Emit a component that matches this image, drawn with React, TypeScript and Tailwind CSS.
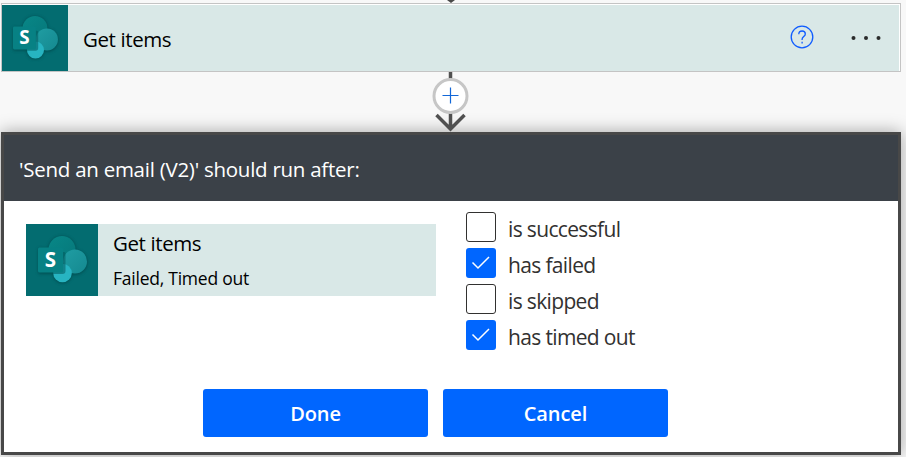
import React from "react";

function SharePointTile({ className }: { className: string }) {
  return (
    <svg className={className} viewBox="0 0 72 72" aria-label="SharePoint">
      <defs>
        <filter id="soft" x="-40%" y="-40%" width="180%" height="180%">
          <feGaussianBlur stdDeviation="1.8" />
        </filter>
        <linearGradient id="top" x1="0" y1="0" x2="1" y2="1">
          <stop offset="0" stopColor="#088787" />
          <stop offset="1" stopColor="#06777a" />
        </linearGradient>
        <linearGradient id="side" x1="0" y1="0" x2="1" y2="1">
          <stop offset="0" stopColor="#209da3" />
          <stop offset="1" stopColor="#148990" />
        </linearGradient>
      </defs>
      <rect width="72" height="72" fill="#036c70" />
      <g filter="url(#soft)" fill="#003f42" opacity="0.6">
        <circle cx="36" cy="26" r="14" />
        <circle cx="49" cy="38.5" r="12.5" />
        <circle cx="36.5" cy="49.5" r="9.8" />
        <rect x="12" y="24" width="26" height="26" rx="2" />
      </g>
      <circle cx="36" cy="25.5" r="13.5" fill="url(#top)" />
      <circle cx="49" cy="37.5" r="12" fill="url(#side)" />
      <circle cx="36.5" cy="49" r="9.3" fill="#27b4c1" />
      <path d="M27 28h11q1.500 0 1.500 1.500V47q0 3-3 3H27z" fill="#02595d" opacity="0.55" />
      <rect x="12" y="23.500" width="25" height="25" rx="1.500" fill="#078184" />
      <text
        x="24.500"
        y="43"
        textAnchor="middle"
        fill="#fff"
        className="font-['Open_Sans',sans-serif] text-[20.500px] font-bold"
      >
        S
      </text>
    </svg>
  );
}

function Check({ label, checked }: { label: string; checked: boolean }) {
  return (
    <div className="flex h-[30px] items-center gap-3">
      <span
        className={
          checked
            ? "flex size-[30px] items-center justify-center rounded-[3px] bg-[#0066ff]"
            : "size-[30px] rounded-[3px] border border-[#323130] bg-white"
        }
      >
        {checked && (
          <svg className="size-[30px]" viewBox="0 0 30 30" fill="none" stroke="#fff" strokeWidth="1.500">
            <path d="M6.500 14.500 12 20 23 9" />
          </svg>
        )}
      </span>
      <span className="pt-[4px] text-[21px] leading-[27px] tracking-[-0.650px] whitespace-nowrap text-[#323130]">
        {label}
      </span>
    </div>
  );
}

export default function App() {
  return (
    <div className="h-[457px] w-[906px] overflow-hidden bg-[#f8f8f8] font-['Open_Sans','Noto_Sans',sans-serif] text-black">
      <div className="flex h-[3px] justify-center pr-[4px]">
        <svg className="h-[3px] w-[10px]" viewBox="0 0 10 3">
          <path d="M1 0h8L5 3z" fill="#484848" />
        </svg>
      </div>
      <div className="ml-px flex h-[69px] w-[900px] items-center border border-[#c4c4c4] bg-white pt-px pr-px">
        <div className="flex h-[66px] w-full items-center bg-[#d9e8e7]">
          <SharePointTile className="size-[66px]" />
          <span className="ml-[15px] flex-1 pt-[3px] text-[20.500px] leading-[27px] tracking-[-0.400px]">Get items</span>
          <svg className="mr-[36px] mb-[2px] size-[24px]" viewBox="0 0 24 24" fill="none" stroke="#0f5cff" strokeWidth="1.300">
            <circle cx="12" cy="12" r="10.800" />
            <path d="M8.800 9.200c0-2 1.300-3.200 3.300-3.200s3.200 1.200 3.200 2.900c0 2.700-3.200 2.700-3.200 5.400v.8M12.100 16.800v1.600" />
          </svg>
          <svg className="mr-[17px] h-[6px] w-[32px]" viewBox="0 0 32 6" fill="#2b2b2b">
            <circle cx="3.500" cy="3" r="2" />
            <circle cx="16" cy="3" r="2" />
            <circle cx="28.500" cy="3" r="2" />
          </svg>
        </div>
      </div>
      <div className="flex h-[60px] justify-center pr-[6px]">
        <svg className="h-[60px] w-[40px]" viewBox="0 0 40 60" fill="none">
          <path d="M20.500 0V57M6.500 43 20.500 57 34.500 43" stroke="#505050" strokeWidth="3.500" />
          <circle cx="20.500" cy="24" r="16.500" fill="#fff" stroke="#c6c6c6" strokeWidth="3" />
          <path d="M12.500 23.500H28.500M20.500 15.500V31.500" stroke="#1267d8" strokeWidth="1.200" />
        </svg>
      </div>
      <section className="ml-px h-[323px] w-[900px] border-[3px] border-[#484848] bg-white shadow-[0_0_16px_rgba(0,0,0,0.350)]">
        <header className="flex h-[66px] items-center bg-[#3b4148] pt-[3px] pl-[15px] text-[20.500px] tracking-[-0.260px] whitespace-nowrap text-white">
          'Send an email (V2)' should run after:
        </header>
        <div className="flex h-[188px] pt-[11px] pl-[22px]">
          <div className="mt-[12px] flex h-[72px] w-[410px] bg-[#d9e8e7]">
            <SharePointTile className="size-[72px]" />
            <div className="ml-[15px] flex flex-col whitespace-nowrap">
              <span className="mt-[6px] text-[20.500px] leading-[27px] tracking-[-0.400px]">Get items</span>
              <span className="mt-[9px] text-[17.500px] leading-[25px] tracking-[-0.240px]">Failed, Timed out</span>
            </div>
          </div>
          <div className="ml-[30px] flex flex-col gap-[6px]">
            <Check label="is successful" checked={false} />
            <Check label="has failed" checked />
            <Check label="is skipped" checked={false} />
            <Check label="has timed out" checked />
          </div>
        </div>
        <div className="flex gap-[15px] pl-[199px] text-[20px] font-semibold tracking-[-0.100px] text-white">
          <button className="h-[48px] w-[225px] rounded-[3px] bg-[#0066ff] pt-px">Done</button>
          <button className="h-[48px] w-[225px] rounded-[3px] bg-[#0066ff] pt-px">Cancel</button>
        </div>
      </section>
    </div>
  );
}
